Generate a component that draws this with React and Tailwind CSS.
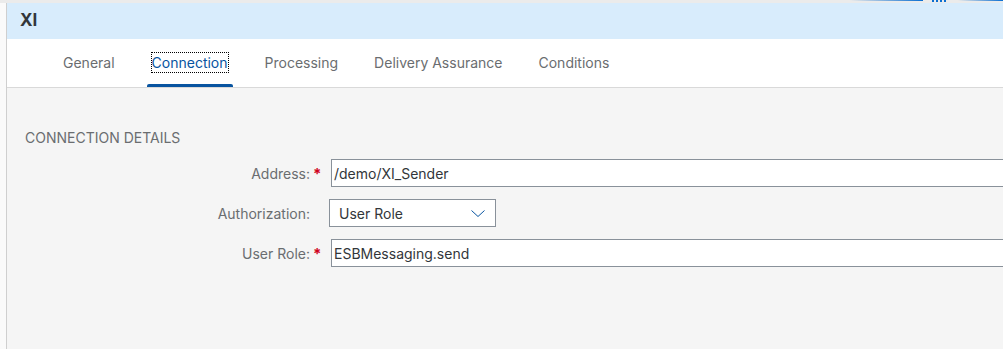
import React from 'react';

const TABS = ['General', 'Connection', 'Processing', 'Delivery Assurance', 'Conditions'];

const Tab = ({ label, active }) => (
    <div className="relative h-full flex items-center px-[4px] pb-[2px]">
        {active ? (
            <span className="text-[#0854a0] leading-[19px] border border-dotted border-black">{label}</span>
        ) : (
            <span className="text-[#6a6d70] leading-[19px]">{label}</span>
        )}
        {active && <div className="absolute bottom-0 left-0 right-0 h-[3px] bg-[#0854a0] rounded-t-[2px]"></div>}
    </div>
);

const Label = ({ text, required }) => (
    <>
        <div className="w-[303px] shrink-0 text-right text-[#6a6d70]">{text}</div>
        <div className="w-[21px] shrink-0 pl-[3px] text-[#d0021b] font-bold text-[15px] leading-none pt-[1px]">{required ? '*' : ''}</div>
    </>
);

const TextField = ({ value }) => (
    <div className="w-[720px] shrink-0 h-[28px] bg-white border border-[#89919a] flex items-center pl-[2px] text-[#32363a]">
        {value}
    </div>
);

export default function App() {
    return (
        <div className="w-[1003px] h-[349px] overflow-hidden bg-[#f7f7f7] text-[14px] font-['Inter',Arial,sans-serif]">
            {/* top strip with shell decoration */}
            <div className="relative h-[3px] bg-[#ebebeb]">
                <div className="absolute top-0 left-[850px] w-[73px] h-[1px] bg-gradient-to-r from-transparent to-[#0a6ed1]"></div>
                <div className="absolute top-0 left-[932px] flex gap-[2px]">
                    <div className="w-[2px] h-[2px] bg-[#0a6ed1]"></div>
                    <div className="w-[2px] h-[2px] bg-[#0a6ed1]"></div>
                    <div className="w-[2px] h-[2px] bg-[#0a6ed1]"></div>
                    <div className="w-[2px] h-[2px] bg-[#0a6ed1]"></div>
                </div>
                <div className="absolute top-0 left-[958px] w-[45px] h-[1px] bg-gradient-to-r from-transparent to-[#0a6ed1]"></div>
            </div>

            <div className="flex h-[346px]">
                <div className="w-[7px] shrink-0 bg-[#fafafa] border-r border-[#cfcfcf]"></div>
                <div className="flex-1 min-w-0 flex flex-col">
                    {/* object header */}
                    <div className="h-[36px] bg-[#d8ecfc] flex items-center pl-[13px]">
                        <span className="text-[17px] font-bold text-[#32363a]">XI</span>
                    </div>

                    {/* tabs */}
                    <div className="h-[49px] bg-white border-b border-[#d9d9d9] flex pl-[52px] gap-[28px]">
                        {TABS.map((t) => (
                            <Tab key={t} label={t} active={t === 'Connection'} />
                        ))}
                    </div>

                    {/* content */}
                    <div className="flex-1 bg-[#f5f5f5] pt-[41px]">
                        <div className="pl-[18px] text-[#6a6d70] leading-[18px] uppercase">Connection Details</div>
                        <div className="mt-[12px] flex flex-col gap-[12px]">
                            <div className="flex items-center h-[28px]">
                                <Label text="Address:" required />
                                <TextField value="/demo/XI_Sender" />
                            </div>
                            <div className="flex items-center h-[28px]">
                                <Label text="Authorization:" />
                                <div className="ml-[-2px] w-[167px] shrink-0 h-[28px] bg-white border border-[#89919a] flex items-center justify-between pl-[9px] pr-[10px] text-[#32363a]">
                                    <span>User Role</span>
                                    <svg width="14" height="7" viewBox="0 0 14 7" fill="none">
                                        <polyline points="0.5,0.5 7,6.5 13.5,0.5" stroke="#0854a0" strokeWidth="1" />
                                    </svg>
                                </div>
                            </div>
                            <div className="flex items-center h-[28px]">
                                <Label text="User Role:" required />
                                <TextField value="ESBMessaging.send" />
                            </div>
                        </div>
                    </div>
                </div>
            </div>
        </div>
    );
}
